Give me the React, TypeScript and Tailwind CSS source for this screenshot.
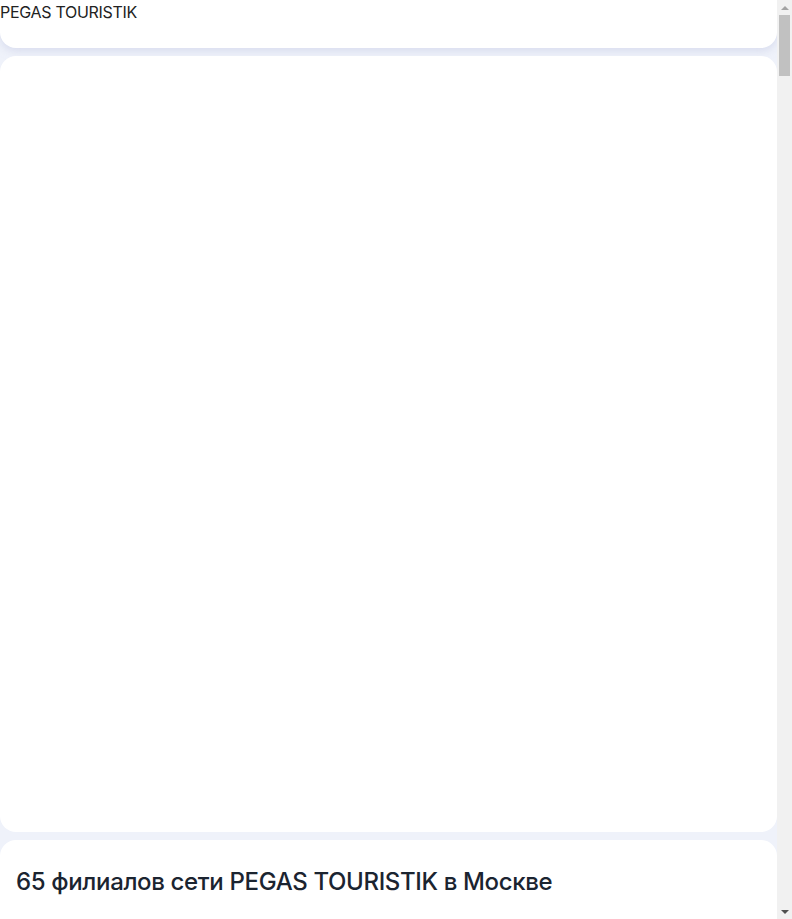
import { MapPin, Clock, Phone } from 'lucide-react';

const streets = [
  'ул. Тверская', 'Ленинский пр-т', 'ул. Арбат', 'Кутузовский пр-т', 'ул. Профсоюзная',
  'пр-т Мира', 'ул. Новослободская', 'Варшавское ш.', 'ул. Маросейка', 'Каширское ш.',
  'ул. Большая Ордынка', 'Ленинградский пр-т', 'ул. Бауманская',
];
const metros = [
  'Пушкинская', 'Октябрьская', 'Смоленская', 'Киевская', 'Новые Черёмушки',
  'Проспект Мира', 'Менделеевская', 'Тульская', 'Китай-город', 'Каширская',
  'Третьяковская', 'Аэропорт', 'Бауманская',
];

const branches = Array.from({ length: 65 }, (_, i) => ({
  id: i + 1,
  name: `Турагентство PEGAS TOURISTIK №${i + 1}`,
  address: `Москва, ${streets[i % streets.length]}, д. ${(i * 7) % 54 + 3}`,
  metro: `м. ${metros[i % metros.length]}`,
  hours: i % 3 === 0 ? 'Пн–Вс: 10:00–21:00' : 'Пн–Пт: 10:00–20:00, Сб–Вс: 11:00–18:00',
  phone: `+7 (495) ${String(200 + i * 11).slice(0, 3)}-${String(10 + i).padStart(2, '0')}-${String(30 + (i % 60)).padStart(2, '0')}`,
}));

function Scrollbar() {
  // classic window scrollbar, drawn over the right edge
  return (
    <div className="fixed right-0 top-0 h-screen w-[15px] bg-[#f1f1f1] flex flex-col items-center">
      <div className="h-[15px] flex items-center justify-center">
        <div className="w-0 h-0 border-x-[4px] border-x-transparent border-b-[4px] border-b-[#a3a3a3]" />
      </div>
      <div className="flex-1 w-full px-[2px]">
        <div className="h-[61px] w-full bg-[#c1c1c1]" />
      </div>
      <div className="h-[15px] flex items-center justify-center">
        <div className="w-0 h-0 border-x-[4px] border-x-transparent border-t-[4px] border-t-[#505050]" />
      </div>
    </div>
  );
}

export default function App() {
  return (
    <div className="min-h-screen bg-[#eff2fa] text-[#222] font-['Inter',sans-serif]">
      <div className="mr-[15px]">
        {/* Header */}
        <header className="h-12 bg-white rounded-b-2xl shadow-[0_3px_8px_rgba(200,205,230,0.6)]">
          <a href="#" className="block text-base leading-6 tracking-[-0.3px] text-[#222]">
            PEGAS TOURISTIK
          </a>
        </header>

        <main className="mt-2 flex flex-col gap-2">
          {/* Map */}
          <div className="h-[776px] bg-white rounded-2xl" />

          {/* Branches */}
          <section className="bg-white rounded-2xl px-4 pt-[26px] pb-6">
            <h1 className="text-[24px] leading-8 font-medium text-[#1b2430] tracking-[-0.35px]">
              65 филиалов сети PEGAS TOURISTIK в Москве
            </h1>
            <ul className="mt-10 flex flex-col">
              {branches.map((b) => (
                <li key={b.id} className="border-t border-[#e6e9f2] py-5 flex flex-col gap-2">
                  <div className="text-base font-semibold text-[#1b2430]">{b.name}</div>
                  <div className="flex items-center gap-2 text-sm text-[#4a5263]">
                    <MapPin className="w-4 h-4 text-[#8a92a6]" />
                    {b.address}
                  </div>
                  <div className="text-sm text-[#8a92a6] pl-6">{b.metro}</div>
                  <div className="flex items-center gap-2 text-sm text-[#4a5263]">
                    <Clock className="w-4 h-4 text-[#8a92a6]" />
                    {b.hours}
                  </div>
                  <div className="flex items-center gap-2 text-sm text-[#4a5263]">
                    <Phone className="w-4 h-4 text-[#8a92a6]" />
                    {b.phone}
                  </div>
                  <button className="self-start mt-1 px-4 py-2 rounded-lg bg-[#eff2fa] text-sm font-medium text-[#1b2430]">
                    Подробнее
                  </button>
                </li>
              ))}
            </ul>
          </section>
        </main>
      </div>
      <Scrollbar />
    </div>
  );
}
